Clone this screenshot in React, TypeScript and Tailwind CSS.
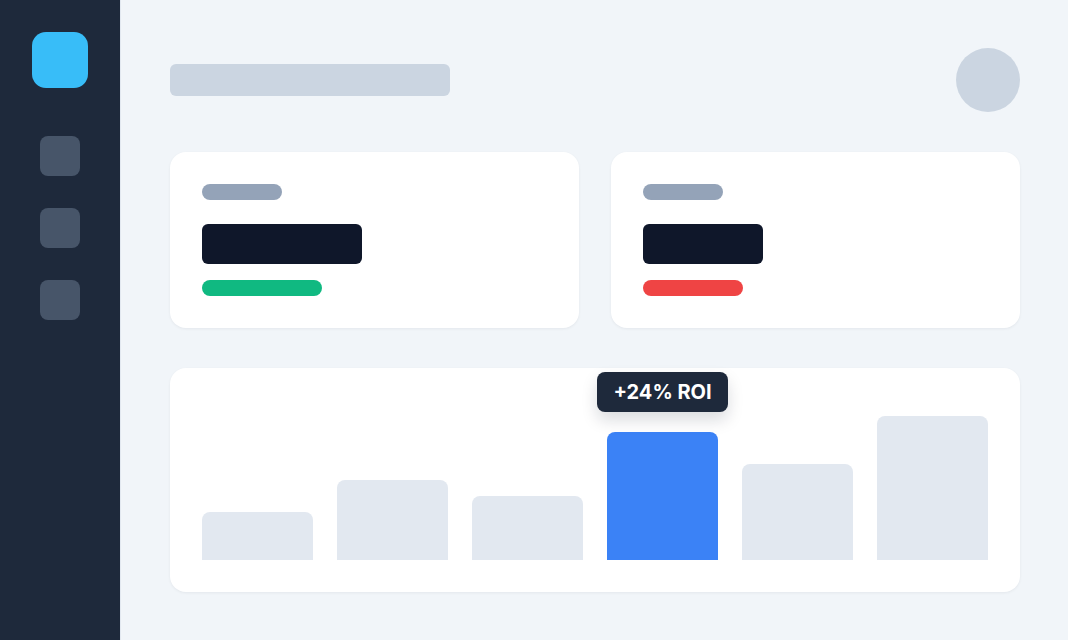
import React from 'react';

const bars = [
    { h: 48, active: false },
    { h: 80, active: false },
    { h: 64, active: false },
    { h: 128, active: true },
    { h: 96, active: false },
    { h: 144, active: false },
];

const StatCard: React.FC<{ valueW: string; trend: string }> = ({ valueW, trend }) => (
    <div className="bg-white rounded-2xl p-8 shadow-[0_1px_3px_rgba(15,23,42,0.06)] flex flex-col">
        <div className="w-20 h-4 rounded-full bg-[#94a3b8]" />
        <div className={`${valueW} h-10 rounded-md bg-[#0f172a] mt-6`} />
        <div className={`${trend} h-4 rounded-full mt-4`} />
    </div>
);

export default function App() {
    return (
        <div className="flex w-[1068px] h-[640px] bg-[#f1f5f9] font-['Inter',sans-serif] overflow-hidden">
            {/* Sidebar */}
            <aside className="w-[120px] shrink-0 bg-[#1e293b] flex flex-col items-center pt-8">
                <div className="w-14 h-14 rounded-[14px] bg-[#38bdf8]" />
                <div className="flex flex-col gap-8 mt-12">
                    <div className="w-10 h-10 rounded-lg bg-[#475569]" />
                    <div className="w-10 h-10 rounded-lg bg-[#475569]" />
                    <div className="w-10 h-10 rounded-lg bg-[#475569]" />
                </div>
            </aside>

            {/* Main */}
            <main className="flex-1 border-l border-[#e2e8f0] pl-[49px] pr-12 pt-12">
                <div className="flex items-center justify-between h-16">
                    <div className="w-[280px] h-8 rounded-md bg-[#cbd5e1]" />
                    <div className="w-16 h-16 rounded-full bg-[#cbd5e1]" />
                </div>

                <div className="grid grid-cols-2 gap-8 mt-10">
                    <StatCard valueW="w-40" trend="w-[120px] bg-[#10b981]" />
                    <StatCard valueW="w-[120px]" trend="w-[100px] bg-[#ef4444]" />
                </div>

                <div className="relative bg-white rounded-2xl p-8 mt-10 shadow-[0_1px_3px_rgba(15,23,42,0.06)]">
                    <div className="flex items-end gap-6 h-40">
                        {bars.map((b, i) => (
                            <div key={i} className="relative flex-1 flex flex-col items-center justify-end">
                                {b.active && (
                                    <div className="absolute bottom-full mb-5 whitespace-nowrap bg-[#1e293b] text-white font-bold text-xl leading-6 px-4 py-2 rounded-lg shadow-[0_8px_16px_rgba(15,23,42,0.15)]">
                                        +24% ROI
                                    </div>
                                )}
                                <div
                                    className={`w-full rounded-t-lg ${b.active ? 'bg-[#3b82f6]' : 'bg-[#e2e8f0]'}`}
                                    style={{ height: b.h }}
                                />
                            </div>
                        ))}
                    </div>
                </div>
            </main>
        </div>
    );
}
